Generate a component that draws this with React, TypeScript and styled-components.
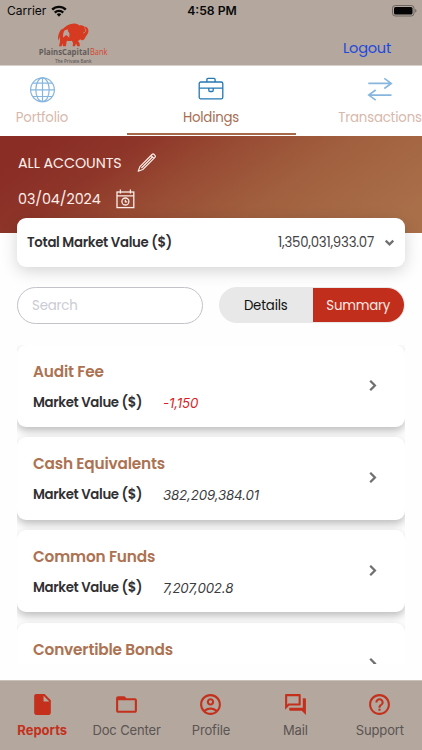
import React from 'react';
import styled, { createGlobalStyle, css } from 'styled-components';
import {
  MdInsertDriveFile,
  MdFolderOpen,
  MdOutlineAccountCircle,
  MdOutlineQuestionAnswer,
  MdHelpOutline,
} from 'react-icons/md';

const GlobalStyle = createGlobalStyle`
  *, *::before, *::after { box-sizing: border-box; }
  body { margin: 0; background: #fefefe; }
  button { border: 0; padding: 0; background: none; font: inherit; letter-spacing: inherit; color: inherit; }
`;

const Screen = styled.div`
  width: 422px;
  height: 750px;
  display: flex;
  flex-direction: column;
  overflow: hidden;
  background: #fefefe;
  font-family: Poppins, Inter, 'Noto Sans', sans-serif;
  font-size: 13.3px;
  letter-spacing: -0.18px;
  color: #303033;
  white-space: nowrap;
`;

const Top = styled.header`
  height: 66px;
  flex: none;
  background: #b3a79e;
  border-bottom: 1px solid #d8d1cb;
`;

const StatusBar = styled.div`
  height: 22px;
  padding: 0 5px 0 7px;
  display: grid;
  grid-template-columns: 1fr auto 1fr;
  align-items: center;
  font: 400 12px/22px Inter, sans-serif;
  letter-spacing: 0;
  color: #090909;
`;

const Carrier = styled.div`
  display: flex;
  align-items: center;
  gap: 5px;
`;

const Time = styled.div`
  font-weight: 600;
  font-size: 12.2px;
`;

const BatterySlot = styled.div`
  display: flex;
  justify-content: flex-end;
`;

const BrandRow = styled.div`
  height: 43px;
  padding: 0 31px 0 38px;
  display: flex;
  justify-content: space-between;
`;

const Logout = styled.button`
  align-self: flex-start;
  height: 52px;
  font-size: 14.6px;
  letter-spacing: -0.25px;
  color: #1f49dd;
`;

const Tabs = styled.nav`
  height: 70px;
  flex: none;
  display: flex;
  margin-left: -42.5px;
  background: #fff;
`;

const Tab = styled.button<{ $active?: boolean }>`
  flex: none;
  width: 169px;
  height: 69px;
  padding-top: 10px;
  display: flex;
  flex-direction: column;
  align-items: center;
  gap: 3px;
  line-height: 24px;
  color: ${(p) => (p.$active ? '#a76e52' : '#d7b8ac')};
  border-bottom: 2px solid ${(p) => (p.$active ? '#a5694c' : 'transparent')};

  svg {
    flex: none;
    color: ${(p) => (p.$active ? '#2478b4' : '#86b6de')};
  }
`;

const Banner = styled.section`
  height: 97px;
  flex: none;
  padding: 14px 18px 0;
  background: linear-gradient(145deg, #8a2d25 8%, #8e3529 26%, #984b33 43%, #a1603f 64%, #a96f49 92%);
  color: #fbeee9;
`;

const BannerLine = styled.div<{ $gap: number }>`
  height: 26px;
  margin-bottom: 10px;
  display: flex;
  align-items: center;
  gap: ${(p) => p.$gap}px;
  font-size: 14.3px;
  letter-spacing: -0.08px;
`;

const TotalCard = styled.section`
  position: relative;
  flex: none;
  height: 49px;
  margin: -15px 17px 0;
  padding: 0 10px;
  display: flex;
  align-items: center;
  border-radius: 9px;
  background: #fff;
  box-shadow: 0 4px 16px rgba(0, 0, 0, 0.17);
`;

const TotalLabel = styled.span`
  flex: 1;
  font-weight: 600;
  letter-spacing: -0.31px;
`;

const TotalValue = styled.span`
  margin-right: 10px;
  letter-spacing: -0.22px;
  color: #444447;
`;

const Controls = styled.div`
  flex: none;
  display: flex;
  justify-content: space-between;
  padding: 20px 17px 0;
`;

const SearchField = styled.input`
  width: 186px;
  height: 37px;
  padding: 0 14px;
  border: 1px solid #c2c2ca;
  border-radius: 19px;
  outline: 0;
  background: #fff;
  font: inherit;
  letter-spacing: inherit;

  &::placeholder {
    color: #cbcbd3;
    opacity: 1;
  }
`;

const Toggle = styled.div`
  width: 186px;
  height: 36px;
  padding: 1px 1px 1px 0;
  display: flex;
  border-radius: 18px;
  background: #e8e8e8;
`;

const ToggleOption = styled.button<{ $on?: boolean }>`
  flex: 1;
  padding-top: 1px;
  border-radius: 0 17px 17px 0;
  color: #111;
  ${(p) =>
    p.$on &&
    css`
      flex: 0 0 91.5px;
      background: #c12e1c;
      color: #ffeae5;
    `}
`;

const List = styled.main`
  flex: none;
  height: 319px;
  margin: 20.500px 17px 0;
  overflow: hidden;
  display: flex;
  flex-direction: column;
  gap: 10.3px;
`;

const HoldingCard = styled.article`
  flex: none;
  height: 82.4px;
  padding: 14px 27px 0 16px;
  display: flex;
  align-items: flex-start;
  justify-content: space-between;
  border-radius: 9px;
  background: #fff;
  box-shadow: 0 4px 9px rgba(0, 0, 0, 0.26);

  > svg {
    margin-top: 20px;
  }
`;

const HoldingTitle = styled.h2`
  margin: 0 0 6px;
  font-size: 15.3px;
  line-height: 26px;
  font-weight: 600;
  letter-spacing: -0.17px;
  color: #ac7252;
`;

const ValueRow = styled.div`
  display: grid;
  grid-template-columns: 130px auto;
  line-height: 24px;
`;

const ValueLabel = styled.span`
  font-weight: 600;
  letter-spacing: -0.34px;
`;

const Value = styled.span<{ $negative?: boolean }>`
  font-family: Inter, sans-serif;
  font-size: 13.3px;
  font-style: italic;
  letter-spacing: -0.15px;
  color: ${(p) => (p.$negative ? '#d91e25' : '#3c3c3f')};
`;

const BottomNav = styled.nav`
  height: 70px;
  flex: none;
  margin-top: auto;
  display: grid;
  grid-template-columns: repeat(5, 1fr);
  background: #b3a79e;
  border-top: 1px solid #c9c1bb;
`;

const NavItem = styled.button<{ $active?: boolean }>`
  padding-top: 11px;
  display: flex;
  flex-direction: column;
  align-items: center;
  gap: 3px;
  font: ${(p) => (p.$active ? 700 : 400)} 13px/20px Inter, sans-serif;
  letter-spacing: ${(p) => (p.$active ? 0 : -0.13)}px;
  color: ${(p) => (p.$active ? '#c4301c' : '#5a5452')};

  svg {
    flex: none;
    color: #c4301c;
  }
`;

const Wifi = () => (
  <svg width="16" height="12" viewBox="0 0 16 12" fill="none" stroke="#090909" strokeWidth="2.4">
    <path d="M1.200 4.700a9.600 9.600 0 0 1 13.600 0" />
    <path d="M3.800 7.600a5.900 5.900 0 0 1 8.400 0" />
    <path d="M8 11.700 5.700 9.300a3.300 3.300 0 0 1 4.600 0z" fill="#090909" stroke="none" />
  </svg>
);

const Battery = () => (
  <svg width="25" height="12" viewBox="0 0 25 12">
    <rect x="0.5" y="0.5" width="21.5" height="10.5" rx="2.8" fill="none" stroke="#6d6662" />
    <rect x="2" y="2" width="18.5" height="7.5" rx="1.5" fill="#050505" />
    <path d="M23.2 4v3.6c.8-.3 1.3-1 1.3-1.8s-.5-1.500-1.300-1.800z" fill="#6d6662" />
  </svg>
);

const Logo = () => (
  <svg width="76" height="43" viewBox="0 0 76 43">
    <path
      fill="#d63a21"
      d="M25.500 6.500C27.800 4 31.800 1.600 36.200 1.500c2-.1 3.600.7 5.400 2 1.800-.5 3.500.1 4.700 1.200 1.400-.1 2.400.3 3.200 1.200 1 1.400 1.200 3.500.5 5.200-.6 1.500-1.600 2.400-2.200 3.500-.7 1.400-1.100 2.700-2.500 3.400-1.200.5-2.200 0-3-.7-.8.9-1.500 1.300-2.400 1.600l1.600 2.100.4 3.300h-2.600l-1.200-2.900-1.200 2.900h-2.300l.5-3.100-1.200-2.500c-1.700.5-3.400.5-4.900 0-.7 1.200-.5 2.300-.8 3.700l-.4 1.900h-3l.3-3-1.600 3h-2.500l.9-4c.3-2.200-.3-3.400-.1-5.400-.8.900-.9 2.700-1.500 3.700-.9-2.600.1-7.100 1.800-9.700.8-1.200 1.800-1.900 3.400-2.400z"
    />
    <path fill="#b3a79e" d="m26.800 8.300 3.200-1.100c-.6 1.500.4 2.400 1.100 3.600.8 1.400.1 3 .1 5-1.100-.7-1.600-2.200-2.700-2.500-1.300-.2-2.200 1.500-3.500 2.300.1-2.700.1-5.500 1.800-7.300z" />
    <path fill="none" stroke="#b3a79e" strokeWidth="0.700" d="M46.300 5.700c1.200.8 1.700 1.900 1.300 3.300-.3 1.200-1.200 1.900-2.400 2" />
    <text x="0.800" y="33" textLength="50.500" lengthAdjust="spacingAndGlyphs" fontFamily="Open Sans, sans-serif" fontSize="9.600" fontWeight="700" letterSpacing="0" fill="#625c5a">PlainsCapital</text>
    <text x="52" y="33" textLength="17.500" lengthAdjust="spacingAndGlyphs" fontFamily="Open Sans, sans-serif" fontSize="9.600" fontWeight="500" letterSpacing="0" fill="#d8442d">Bank</text>
    <text x="17" y="40.600" textLength="36.500" lengthAdjust="spacingAndGlyphs" fontFamily="Open Sans, sans-serif" fontSize="5" fontWeight="600" letterSpacing="0" fill="#625c5a">The Private Bank</text>
  </svg>
);

const Globe = () => (
  <svg width="27" height="27" viewBox="0 0 27 27" fill="none" stroke="currentColor" strokeWidth="1.200">
    <circle cx="13.500" cy="13.800" r="11.900" />
    <ellipse cx="13.500" cy="13.800" rx="6.700" ry="11.900" />
    <path d="M13.500 1.800v24M1.500 13.800h24M3.700 7.100h19.600M3.700 20.500h19.600" />
  </svg>
);

const Briefcase = () => (
  <svg width="27" height="27" viewBox="0 0 27 27" fill="none" stroke="currentColor" strokeWidth="1.300" strokeLinejoin="round">
    <rect x="1.200" y="6" width="23.600" height="16.800" rx="1.600" />
    <path d="M8.900 6V3.500c0-.7.4-1.100 1.100-1.100h6c.7 0 1.100.4 1.100 1.100V6M1.200 12.100h23.600M10.800 12.100v2.200c0 .8.4 1.200 1.100 1.200h2.200c.7 0 1.100-.4 1.100-1.200v-2.200" />
  </svg>
);

const Transfer = () => (
  <svg width="27" height="27" viewBox="0 0 27 27" fill="none" stroke="currentColor" strokeWidth="1.600">
    <path d="M1.300 7.400h22.800M17.300 2.300l7 5.100-7 5.100M24.500 19.100H2M8.700 14l-7 5.100 7 5.100" />
  </svg>
);

const Pencil = () => (
  <svg width="20" height="20" viewBox="0 0 20 20" fill="none" stroke="currentColor" strokeWidth="1.200" strokeLinejoin="round">
    <path d="M1.200 18.200 2.900 13.600 15 1.500c.7-.7 1.400-.7 2.100 0l.8.800c.7.700.7 1.400 0 2.100L5.800 16.500zM14 2.500l2.900 2.900M4.400 15 15.400 4" />
  </svg>
);

const CalendarClock = () => (
  <svg width="19" height="20" viewBox="0 0 19 20" fill="none" stroke="currentColor" strokeWidth="1.300">
    <rect x="1" y="3" width="16.800" height="15.600" />
    <path d="M1 6.800h16.800M4.400 .6v3.800M14.400 .6v3.800" />
    <circle cx="9.400" cy="12.500" r="3.500" />
    <path d="M9.400 10.700v2.100h1.800" />
  </svg>
);

const ChevronDown = () => (
  <svg width="11" height="9" viewBox="0 0 11 9" fill="none" stroke="#707072" strokeWidth="2.200">
    <path d="m1.700 2.600 3.800 3.800 3.800-3.800" />
  </svg>
);

const ChevronRight = () => (
  <svg width="10" height="13" viewBox="0 0 10 13" fill="none" stroke="#707072" strokeWidth="2.300">
    <path d="m2.200 1.800 4.700 4.700-4.700 4.700" />
  </svg>
);

const holdings = [
  { name: 'Audit Fee', value: '-1,150' },
  { name: 'Cash Equivalents', value: '382,209,384.01' },
  { name: 'Common Funds', value: '7,207,002.8' },
  { name: 'Convertible Bonds', value: '' },
];

const navItems = [
  { label: 'Reports', Icon: MdInsertDriveFile },
  { label: 'Doc Center', Icon: MdFolderOpen },
  { label: 'Profile', Icon: MdOutlineAccountCircle },
  { label: 'Mail', Icon: MdOutlineQuestionAnswer },
  { label: 'Support', Icon: MdHelpOutline },
];

export default function App() {
  return (
    <>
      <GlobalStyle />
      <Screen>
        <Top>
          <StatusBar>
            <Carrier>Carrier <Wifi /></Carrier>
            <Time>4:58 PM</Time>
            <BatterySlot><Battery /></BatterySlot>
          </StatusBar>
          <BrandRow>
            <Logo />
            <Logout>Logout</Logout>
          </BrandRow>
        </Top>
        <Tabs>
          <Tab><Globe />Portfolio</Tab>
          <Tab $active><Briefcase />Holdings</Tab>
          <Tab><Transfer />Transactions</Tab>
        </Tabs>
        <Banner>
          <BannerLine $gap={15}>ALL ACCOUNTS <Pencil /></BannerLine>
          <BannerLine $gap={15}>03/04/2024 <CalendarClock /></BannerLine>
        </Banner>
        <TotalCard>
          <TotalLabel>Total Market Value ($)</TotalLabel>
          <TotalValue>1,350,031,933.07</TotalValue>
          <ChevronDown />
        </TotalCard>
        <Controls>
          <SearchField placeholder="Search" />
          <Toggle>
            <ToggleOption>Details</ToggleOption>
            <ToggleOption $on>Summary</ToggleOption>
          </Toggle>
        </Controls>
        <List>
          {holdings.map((h) => (
            <HoldingCard key={h.name}>
              <div>
                <HoldingTitle>{h.name}</HoldingTitle>
                {h.value && (
                  <ValueRow>
                    <ValueLabel>Market Value ($)</ValueLabel>
                    <Value $negative={h.value.startsWith('-')}>{h.value}</Value>
                  </ValueRow>
                )}
              </div>
              <ChevronRight />
            </HoldingCard>
          ))}
        </List>
        <BottomNav>
          {navItems.map(({ label, Icon }, i) => (
            <NavItem key={label} $active={i === 0}>
              <Icon size={25} />
              {label}
            </NavItem>
          ))}
        </BottomNav>
      </Screen>
    </>
  );
}
